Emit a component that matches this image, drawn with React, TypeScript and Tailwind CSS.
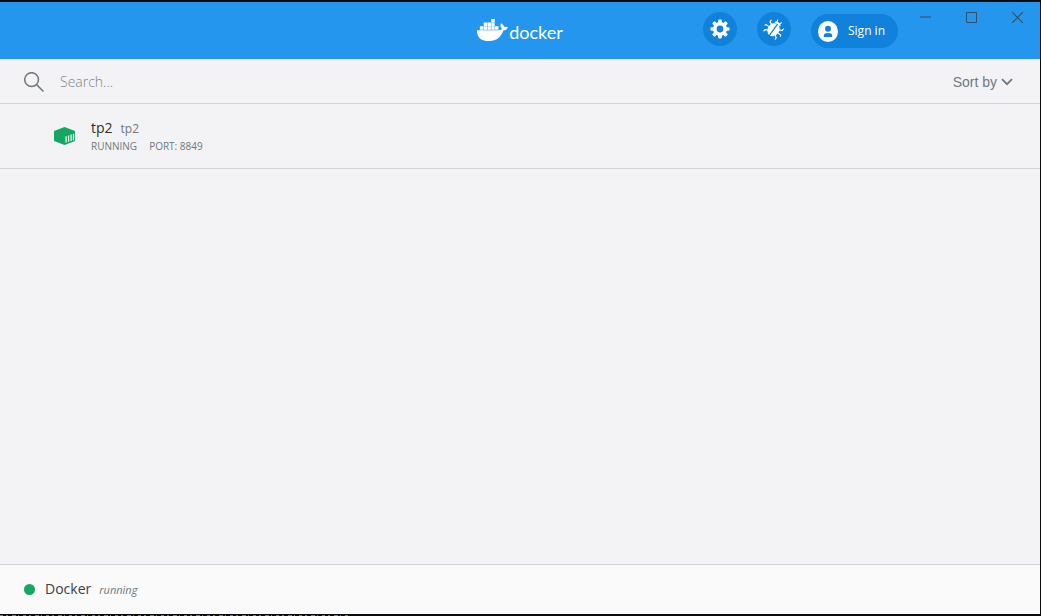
import React from "react";

function Whale() {
  return (
    <svg viewBox="0 0 31 22" className="h-[22px] w-[31px]" fill="#fff" aria-hidden="true">
      <path d="M0 11.2H22C23.6 11.2 24.8 10.4 24.8 9.2C23.2 7.8 23 5.8 24.2 4.2C26 5.4 26.9 6.6 27 8.1C28.4 7.6 30 7.8 31 8.5C30 10.5 28.4 11.4 26.3 11.5C24 18.4 19.6 22 12.3 22C4 22 -0.2 18.4 0 11.2Z" />
      <path d="M2.9 7.3h3.4v3.4H2.9zM6.7 7.3h3.4v3.4H6.7zM10.5 7.3h3.4v3.4h-3.4zM14.3 7.3h3.4v3.4h-3.4zM18.1 7.3h3.4v3.4h-3.4zM6.7 3.6h3.4V7H6.7zM10.5 3.6h3.4V7h-3.4zM14.3 3.6h3.4V7h-3.4zM14.3 0h3.4v3.2h-3.4z" />
    </svg>
  );
}

function Gear() {
  return (
    <svg viewBox="0 0 20 20" className="size-5" aria-hidden="true">
      <g fill="#fff">
        <rect x="8.2" y="0.5" width="3.6" height="19" rx="1" />
        <rect x="8.2" y="0.5" width="3.6" height="19" rx="1" transform="rotate(45 10 10)" />
        <rect x="8.2" y="0.5" width="3.6" height="19" rx="1" transform="rotate(90 10 10)" />
        <rect x="8.2" y="0.5" width="3.6" height="19" rx="1" transform="rotate(135 10 10)" />
        <circle cx="10" cy="10" r="7" />
      </g>
      <circle cx="10" cy="10" r="3.4" fill="#1182dc" />
    </svg>
  );
}

function Bug() {
  return (
    <svg viewBox="0 0 22 22" className="size-[22px]" aria-hidden="true">
      <g transform="rotate(36 11 11)">
        <ellipse cx="11" cy="11.8" rx="5.8" ry="6.8" fill="#fff" />
        <path d="M7.4 5.2C7.8 2.4 14.2 2.4 14.6 5.2Z" fill="#fff" />
        <path d="M11 5V19.5" stroke="#1182dc" strokeWidth="1.3" />
        <g fill="none" stroke="#fff" strokeWidth="1.1">
          <path d="M9.4 4L8.6 1.2M12.6 4L13.4 1.2" />
          <path d="M6.4 8.6L3.6 7.6L3.4 5M15.6 8.6L18.4 7.6L18.6 5" />
          <path d="M5.5 12H2L1.2 13.4M16.5 12H20L20.8 13.4" />
          <path d="M6.4 15.4L4 16.8L4 19M15.6 15.4L18 16.8L18 19" />
        </g>
      </g>
    </svg>
  );
}

function Avatar() {
  return (
    <svg viewBox="0 0 20 21" className="h-[21px] w-5" aria-hidden="true">
      <ellipse cx="10" cy="10.5" rx="10" ry="10.5" fill="#fff" />
      <circle cx="10" cy="7.8" r="3" fill="#1182dc" />
      <path d="M5.8 16V14.6C5.8 12.7 7.3 12 10 12S14.2 12.7 14.2 14.6V16Z" fill="#1182dc" />
    </svg>
  );
}

function ContainerBox() {
  return (
    <svg viewBox="0 0 22 18" className="h-[18px] w-[22px] shrink-0" aria-hidden="true">
      <path d="M10.5 0L21 4V14L10.5 18L0 14V4Z" fill="#13a761" />
      <path d="M12.1 9.2V15.6M14.6 8.4V14.8M17.1 7.5V14M19.5 6.7V13.2" stroke="#e8f6ee" strokeWidth="1.3" />
    </svg>
  );
}

function Header() {
  return (
    <header className="grid h-[57px] shrink-0 grid-cols-[1fr_auto_1fr] bg-[#2496ed]">
      <div />
      <div className="flex items-start pt-[17px] text-white">
        <Whale />
        <span className="ml-px pt-1 font-['Lato',sans-serif] text-lg leading-[18px]">docker</span>
      </div>
      <div className="flex items-start justify-end">
        <div className="mr-1 flex items-start gap-5 pt-[10px]">
          <button type="button" aria-label="Settings" className="flex size-[34px] items-center justify-center rounded-full bg-[#1182dc]">
            <Gear />
          </button>
          <button type="button" aria-label="Troubleshoot" className="flex size-[34px] items-center justify-center rounded-full bg-[#1182dc]">
            <Bug />
          </button>
          <button type="button" className="mt-0.5 flex h-[34px] items-center gap-[10px] rounded-full bg-[#1182dc] pr-[13px] pl-[7px] text-xs font-medium whitespace-nowrap text-white">
            <Avatar />
            Sign in
          </button>
        </div>
        <button type="button" aria-label="Minimize" className="flex h-[30px] w-[46px] items-center justify-center">
          <svg viewBox="0 0 11 11" className="size-[11px]" aria-hidden="true">
            <path d="M0 5H11" stroke="#2e6fa8" strokeWidth="2" />
          </svg>
        </button>
        <button type="button" aria-label="Maximize" className="flex h-[30px] w-[46px] items-center justify-center">
          <svg viewBox="0 0 11 11" className="size-[11px]" aria-hidden="true">
            <path d="M.5 .5H10.5V10.5H.5Z" fill="none" stroke="#2f4f6c" />
          </svg>
        </button>
        <button type="button" aria-label="Close" className="flex h-[30px] w-[46px] items-center justify-center">
          <svg viewBox="0 0 11 11" className="size-[11px]" aria-hidden="true">
            <path d="M0 0L11 11M11 0L0 11" stroke="#2f4f6c" strokeWidth="1.1" />
          </svg>
        </button>
      </div>
    </header>
  );
}

function SearchBar() {
  return (
    <div className="flex h-[45px] shrink-0 items-center border-t border-b border-t-[#dfe6ee] border-b-[#d3d4d7] pt-px pr-[27px] pl-6">
      <label htmlFor="search" aria-label="Search">
        <svg viewBox="0 0 20 20" className="size-5" fill="none" stroke="#6f787d" strokeWidth="1.5" aria-hidden="true">
          <circle cx="7.6" cy="7.6" r="6.9" />
          <path d="M12.6 12.6L19.5 19.5" />
        </svg>
      </label>
      <input
        id="search"
        type="text"
        placeholder="Search..."
        className="ml-4 min-w-0 flex-1 bg-transparent text-sm font-light text-[#555] outline-none placeholder:text-[#7f8589]"
      />
      <button type="button" className="flex items-center gap-1 font-['Liberation_Sans',sans-serif] text-sm text-[#6f787d]">
        Sort by
        <svg viewBox="0 0 12 8" className="h-2 w-3" fill="none" stroke="#6f787d" strokeWidth="1.8" aria-hidden="true">
          <path d="M1 1.2L6 6.2L11 1.2" />
        </svg>
      </button>
    </div>
  );
}

function ContainerRow() {
  return (
    <li className="flex h-[65px] items-center gap-[15px] border-b border-[#d3d4d7] pl-[54px]">
      <ContainerBox />
      <div>
        <div className="flex items-baseline gap-2 leading-5">
          <span className="text-sm text-[#2b2f31]">tp2</span>
          <span className="text-xs text-[#6f787d]">tp2</span>
        </div>
        <div className="flex gap-3 text-[10px] leading-4 text-[#6f787d]">
          <span>RUNNING</span>
          <span>PORT: 8849</span>
        </div>
      </div>
    </li>
  );
}

export default function App() {
  return (
    <div className="flex min-h-screen flex-col border-t-2 border-r border-[#0b0b0d] bg-[#f3f3f5] font-['Open_Sans',sans-serif]">
      <Header />
      <main className="flex flex-1 flex-col">
        <SearchBar />
        <ul>
          <ContainerRow />
        </ul>
      </main>
      <footer className="flex h-[50px] shrink-0 items-center border-t border-[#d3d4d7] bg-[#fafafa] pl-6">
        <span className="size-[11px] rounded-full bg-[#13a761]" />
        <span className="flex items-baseline gap-2 pb-0.5 pl-[10px]">
          <span className="text-sm text-[#3c4043]">Docker</span>
          <span className="text-[11px] text-[#6f787d] italic">running</span>
        </span>
      </footer>
      <div className="h-0.5 bg-[#0b0b0d]">
        <svg viewBox="0 0 348 2" className="h-0.5 w-[348px]" aria-hidden="true">
          <path d="M0 1.5H348" stroke="#747985" strokeDasharray="3 3 2 4 4 2 1 4" />
        </svg>
      </div>
    </div>
  );
}
